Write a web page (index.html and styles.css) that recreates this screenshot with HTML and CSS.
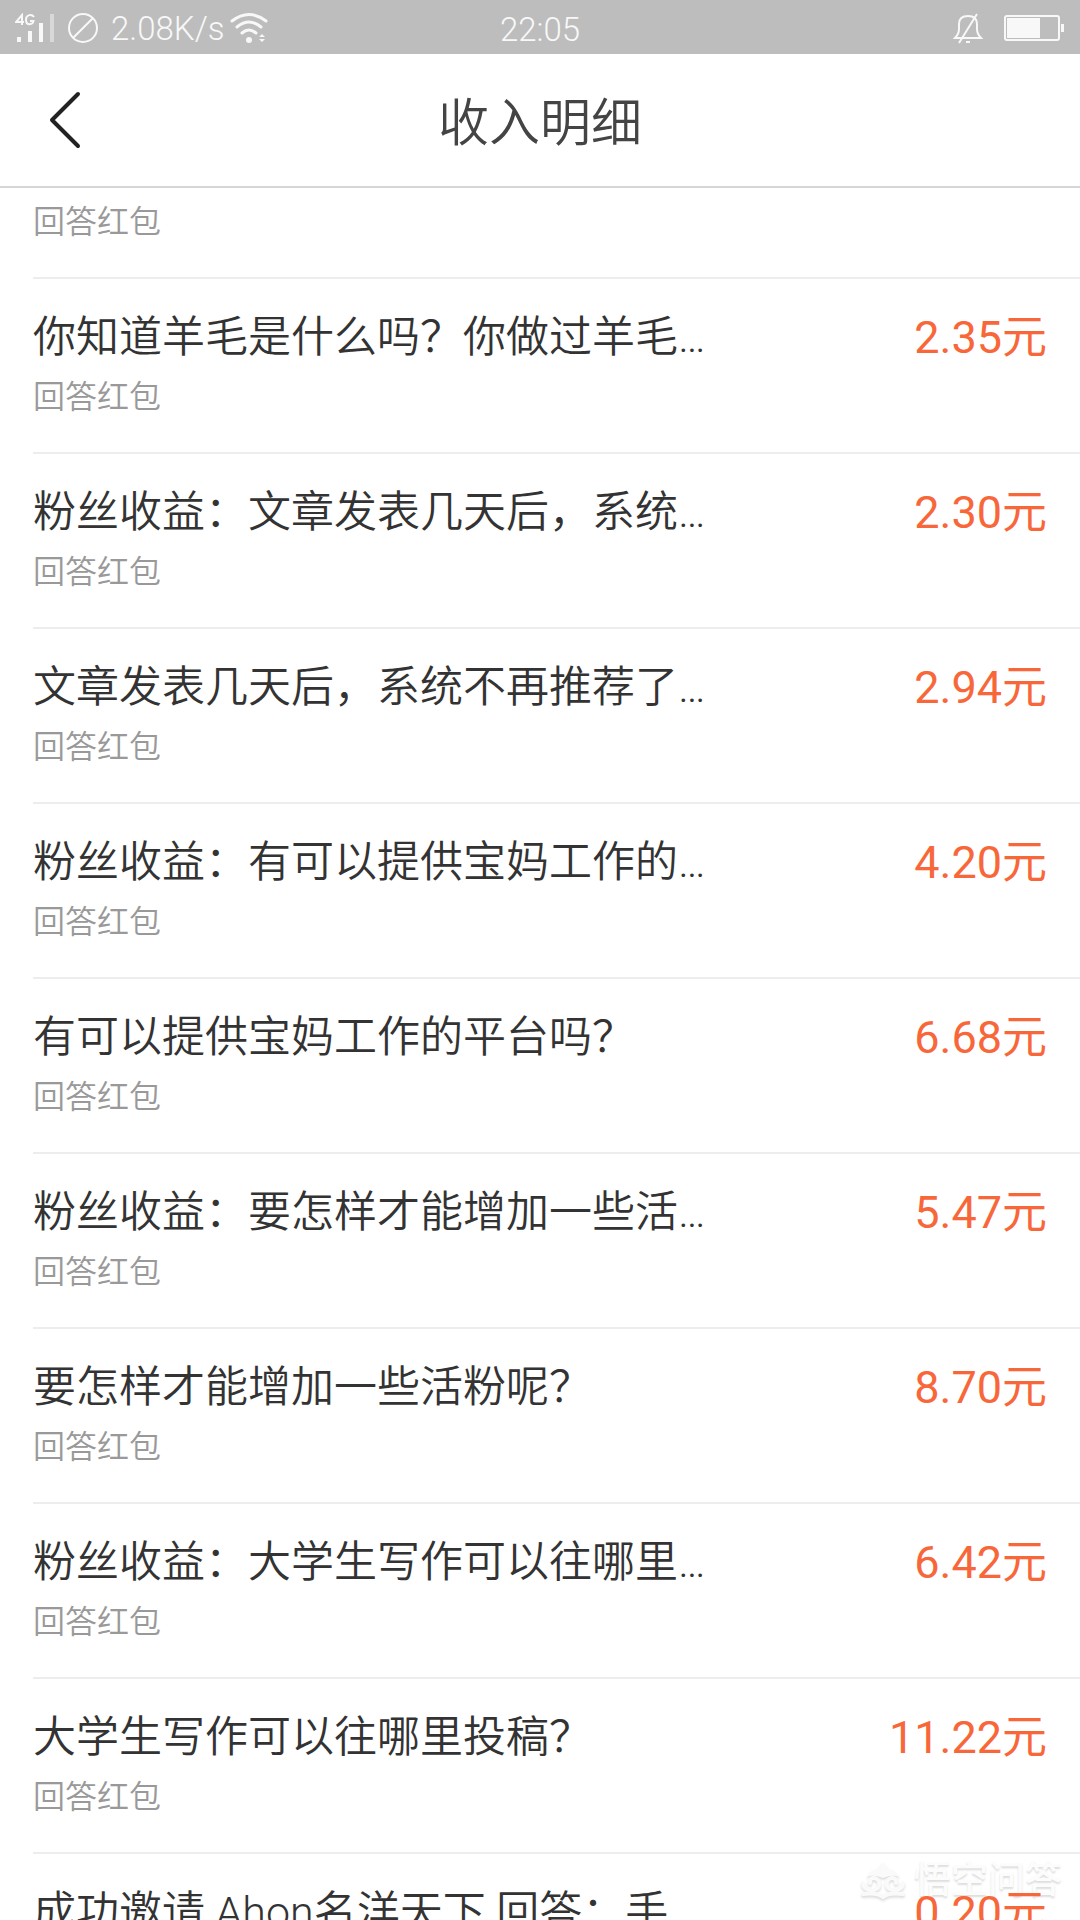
FILE: index.html
```html
<!DOCTYPE html>
<html lang="zh-CN">
<head>
<meta charset="utf-8">
<meta name="viewport" content="width=device-width, initial-scale=1">
<title>收入明细</title>
<link rel="stylesheet" href="styles.css">
</head>
<body>
<div class="app">
  <div class="status">
    <div class="status-left">
      <svg class="signal" width="40" height="30" viewBox="0 0 40 30" aria-hidden="true">
        <path fill="none" stroke="currentColor" stroke-width="2" d="M7 12V2L1 9H9M19 4C17 1 11 1 11 7S18 12 18.500 8H15"/>
        <path fill="currentColor" d="M2 24h4v5H2zM13 18h4v11h-4zM24 10h4v19h-4z"/>
        <path fill="currentColor" opacity=".45" d="M35 1h4v28h-4z"/>
      </svg>
      <svg width="32" height="32" viewBox="0 0 32 32" fill="none" stroke="currentColor" stroke-width="2" aria-hidden="true">
        <circle cx="16" cy="16" r="14"/><path d="M6 26L26 6"/>
      </svg>
      <span class="speed">2.08K/s</span>
      <svg class="wifi" width="38" height="32" viewBox="0 0 38 32" fill="none" stroke="currentColor" stroke-width="3" stroke-linecap="round" aria-hidden="true">
        <path d="M2 9Q19 -4 36 9M7 15Q19 5 31 15M12 21Q19 15 26 21"/>
        <circle cx="19" cy="28" r="3" fill="currentColor" stroke="none"/>
        <path d="M29 25l3-3 3 3zM29 27l3 3 3-3z" fill="currentColor" stroke="none"/>
      </svg>
    </div>
    <time class="clock">22:05</time>
    <div class="status-right">
      <svg width="30" height="32" viewBox="0 0 30 32" fill="none" stroke="currentColor" stroke-width="2" aria-hidden="true">
        <path d="M5 26H28Q24 22 24 17V12Q24 4 15 4T6 12V17Q6 22 2 26H5M24 2L6 31"/><path d="M13 30h4"/>
      </svg>
      <svg width="62" height="28" viewBox="0 0 62 28" aria-hidden="true">
        <rect x="2" y="2" width="54" height="24" rx="2" fill="none" stroke="currentColor" stroke-width="2"/>
        <path fill="currentColor" d="M4 4h33v20H4zM58 10h3v8h-3z"/>
      </svg>
    </div>
  </div>
  <header class="header">
    <button class="back" type="button" aria-label="返回">
      <svg width="32" height="58" viewBox="0 0 32 58" fill="none" stroke="currentColor" stroke-width="4" stroke-linecap="round" stroke-linejoin="round"><path d="M29 3L3 29L29 55"/></svg>
    </button>
    <h1 class="heading">收入明细</h1>
  </header>
  <ul class="list">
    <li class="row row-cut"><div class="info"><p class="kind">回答红包</p></div></li>
    <li class="row"><div class="info"><p class="title">你知道羊毛是什么吗？你做过羊毛…</p><p class="kind">回答红包</p></div><span class="amount">2.35元</span></li>
    <li class="row"><div class="info"><p class="title">粉丝收益：文章发表几天后，系统…</p><p class="kind">回答红包</p></div><span class="amount">2.30元</span></li>
    <li class="row"><div class="info"><p class="title">文章发表几天后，系统不再推荐了…</p><p class="kind">回答红包</p></div><span class="amount">2.94元</span></li>
    <li class="row"><div class="info"><p class="title">粉丝收益：有可以提供宝妈工作的…</p><p class="kind">回答红包</p></div><span class="amount">4.20元</span></li>
    <li class="row"><div class="info"><p class="title">有可以提供宝妈工作的平台吗？</p><p class="kind">回答红包</p></div><span class="amount">6.68元</span></li>
    <li class="row"><div class="info"><p class="title">粉丝收益：要怎样才能增加一些活…</p><p class="kind">回答红包</p></div><span class="amount">5.47元</span></li>
    <li class="row"><div class="info"><p class="title">要怎样才能增加一些活粉呢？</p><p class="kind">回答红包</p></div><span class="amount">8.70元</span></li>
    <li class="row"><div class="info"><p class="title">粉丝收益：大学生写作可以往哪里…</p><p class="kind">回答红包</p></div><span class="amount">6.42元</span></li>
    <li class="row"><div class="info"><p class="title">大学生写作可以往哪里投稿？</p><p class="kind">回答红包</p></div><span class="amount">11.22元</span></li>
    <li class="row"><div class="info"><p class="title">成功邀请 Ahon名洋天下 回答：手</p></div><span class="amount">0.20元</span></li>
  </ul>
  <div class="watermark">
    <svg width="46" height="40" viewBox="0 0 46 40" aria-hidden="true">
      <path fill="#fafafa" d="M6 16Q12 8 17 8L23 1L29 8Q34 8 40 16Q33 13 23 17Q13 13 6 16z"/>
      <path fill="none" stroke="#fafafa" stroke-width="4" stroke-linecap="round" d="M19 25C21 16 9 14 10 22M27 25C25 16 37 14 36 22M3 22C3 31 17 31 19 25M43 22C43 31 29 31 27 25M3 33Q17 31 23 36Q29 31 43 33"/>
    </svg>
    <span>悟空问答</span>
  </div>
</div>
</body>
</html>
```
FILE: styles.css
```css
* {
  box-sizing: border-box;
}

body {
  margin: 0;
  background: #fff;
  color: #333;
  font-family: Roboto, "Noto Sans CJK SC", sans-serif;
  font-weight: 350;
}

h1,
p,
ul {
  margin: 0;
  padding: 0;
  font-weight: inherit;
}

.app {
  position: relative;
  z-index: 0;
  display: flex;
  flex-direction: column;
  height: 100vh;
  overflow: hidden;
}

.status {
  display: grid;
  grid-template-columns: 1fr auto 1fr;
  align-items: center;
  flex: none;
  height: 54px;
  padding: 0 15px;
  background: #bdbdbd;
  color: #f8f8f8;
  font-size: 33px;
  line-height: 52px;
}

.status-left,
.status-right {
  display: flex;
  align-items: center;
}

.status-left {
  gap: 12px;
}

.wifi {
  margin-left: -7px;
}

.status-right {
  justify-content: flex-end;
  gap: 20px;
}

.clock {
  padding-top: 4px;
}

.speed {
  padding-top: 2px;
}

.header {
  display: grid;
  grid-template-columns: 1fr auto 1fr;
  align-items: center;
  flex: none;
  height: 134px;
  padding: 0 33px;
  border-bottom: 2px solid #d6d6d6;
}

.back {
  justify-self: start;
  display: flex;
  padding: 0 16px;
  border: 0;
  background: none;
  color: #222;
}

.heading {
  padding-top: 7px;
  color: #444;
  font-size: 51px;
  line-height: 76px;
}

.list {
  flex: 1;
  min-height: 0;
  overflow: hidden;
  padding-left: 33px;
  list-style: none;
}

.row {
  display: flex;
  justify-content: space-between;
  padding: 28px 33px 31px 0;
  border-bottom: 2px solid #ededed;
}

.row-cut {
  padding-top: 10px;
}

.title {
  margin-bottom: 6px;
  font-size: 43px;
  line-height: 60px;
}

.kind {
  color: #999;
  font-size: 32px;
  line-height: 48px;
}

.amount {
  color: #f8673a;
  font-size: 45px;
  font-weight: 400;
  line-height: 62px;
}

.watermark {
  position: absolute;
  z-index: -1;
  right: 18px;
  bottom: 12px;
  display: flex;
  align-items: center;
  gap: 8px;
  color: #fcfcfc;
  font-size: 37px;
  font-weight: 500;
  line-height: 54px;
  text-shadow: 0 2px 2px #ddd;
}

.watermark svg {
  filter: drop-shadow(0 2px 1px #ddd);
}
```
